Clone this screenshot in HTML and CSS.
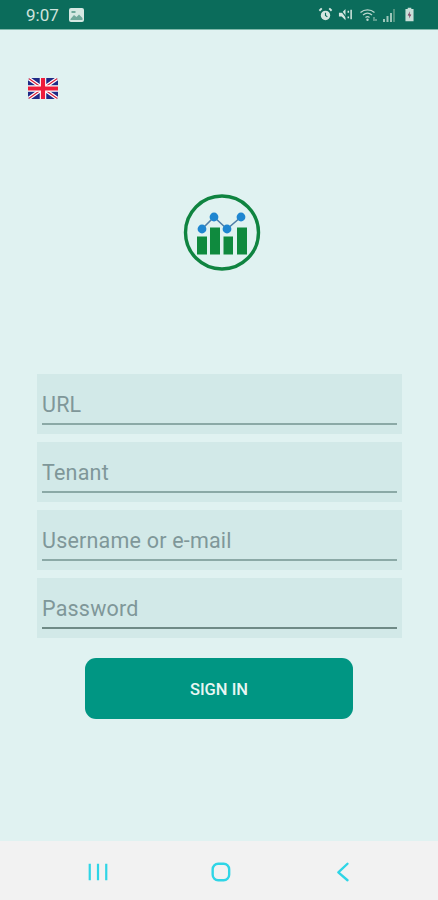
FILE: index.html
```html
<!DOCTYPE html>
<html lang="en">
<head>
<meta charset="utf-8">
<title>Sign in</title>
<link rel="stylesheet" href="styles.css">
</head>
<body>
<div class="screen">
  <header class="status">
    <div class="status-left">
      <span class="time">9:07</span>
      <svg class="ic-img" viewBox="0 0 15 14"><rect x="0" y="0" width="15" height="14" rx="2" fill="#d5e8e2"/><path d="M1.5 11 L5 7 L7.5 9 L10 6.5 L13.5 10 V12 H1.5Z" fill="#6fa99b"/><rect x="2.5" y="3" width="4" height="2" fill="#6fa99b"/></svg>
    </div>
    <div class="status-right">
      <svg class="ic-alarm" viewBox="0 0 16 16"><circle cx="8" cy="9" r="5" fill="#d3e6e0"/><path d="M1.5 4 L4 1.5 M14.5 4 L12 1.5" stroke="#d3e6e0" stroke-width="2"/><path d="M8 6 V9 L10 10.5" stroke="#0c6d5c" stroke-width="1.2" fill="none"/></svg>
      <svg class="ic-mute" viewBox="0 0 16 16"><path d="M1 6 H4 L8 2 V14 L4 10 H1Z" fill="#d3e6e0"/><path d="M2 2 L11 14" stroke="#0c6d5c" stroke-width="1.2"/><path d="M11 4 V6 M11 10 V12 M14 3 V13" stroke="#d3e6e0" stroke-width="1.6"/></svg>
      <svg class="ic-wifi" viewBox="0 0 18 14"><path d="M1 4.5 C5 1 11 1 15 4.5 M3.5 7 C6.5 4.5 9.5 4.5 12.5 7 M6 9.5 C7.5 8.3 8.5 8.3 10 9.5" stroke="#b9d6cd" stroke-width="1.3" fill="none"/><circle cx="8" cy="11.7" r="1.2" fill="#b9d6cd"/><path d="M14.5 9 V13 M16.5 11 V13" stroke="#8fbdaf" stroke-width="1.2"/></svg>
      <svg class="ic-sig" viewBox="0 0 13 14"><path d="M1 14 V11 H3 V14Z M4.5 14 V8 H6.5 V14Z M8 14 V5 H10 V14Z" fill="#9cc6b9"/><path d="M11 14 V1 H13 V14Z" fill="#4f937f"/></svg>
      <svg class="ic-bat" viewBox="0 0 10 15"><path d="M3 0 H7 V1.5 H9.5 V15 H0.5 V1.5 H3Z" fill="#c8dfd8"/><path d="M5.5 4 L3 8.5 H5 L4.5 12 L7 7.5 H5Z" fill="#7a2f55"/></svg>
    </div>
  </header>

  <main class="content">
    <svg class="flag" viewBox="0 0 30 21" role="img" aria-label="English">
      <defs><clipPath id="fc"><rect width="30" height="21" rx="2.5"/></clipPath></defs>
      <g clip-path="url(#fc)">
        <rect width="30" height="21" fill="#1f2a86"/>
        <path d="M0 0 L30 21 M30 0 L0 21" stroke="#fff" stroke-width="3.6"/>
        <path d="M0 0 L30 21 M30 0 L0 21" stroke="#d8203a" stroke-width="1.2"/>
        <path d="M15 0 V21 M0 10.5 H30" stroke="#fff" stroke-width="6.5"/>
        <path d="M15 0 V21 M0 10.5 H30" stroke="#ee1c3a" stroke-width="4.2"/>
      </g>
    </svg>

    <div class="logo-wrap">
      <svg class="logo" viewBox="0 0 78 78">
        <circle cx="39" cy="38.5" r="36.5" fill="none" stroke="#0f8440" stroke-width="3.4"/>
        <g fill="#0f8a3e">
          <rect x="14" y="42.5" width="10" height="18"/>
          <rect x="27" y="33.5" width="10" height="27"/>
          <rect x="40.5" y="42.5" width="9.5" height="18"/>
          <rect x="54" y="33.5" width="10" height="27"/>
        </g>
        <polyline points="19,35 31,23 44,35 58,23" fill="none" stroke="#4f7fa8" stroke-width="1.6"/>
        <g fill="#1f86d0">
          <circle cx="19" cy="35" r="4.4"/>
          <circle cx="31" cy="23" r="4.4"/>
          <circle cx="44" cy="35" r="4.4"/>
          <circle cx="58" cy="23" r="4.4"/>
        </g>
      </svg>
    </div>

    <form class="form">
      <div class="field"><span class="label">URL</span></div>
      <div class="field"><span class="label">Tenant</span></div>
      <div class="field"><span class="label">Username or e-mail</span></div>
      <div class="field field-active"><span class="label">Password</span></div>
      <div class="btn">SIGN IN</div>
    </form>
  </main>

  <nav class="nav">
    <svg class="nav-ic" viewBox="0 0 24 24"><path d="M3 3 V21 M12 3 V21 M21 3 V21" stroke="#2fd5e6" stroke-width="2.4" fill="none"/></svg>
    <svg class="nav-ic" viewBox="0 0 24 24"><rect x="4" y="3" width="18" height="18" rx="6" stroke="#2fd5e6" stroke-width="2.6" fill="none"/></svg>
    <svg class="nav-ic" viewBox="0 0 24 24"><path d="M18 3 L8 12.5 L18 21" stroke="#2fd5e6" stroke-width="2.6" fill="none" stroke-linecap="round" stroke-linejoin="round"/></svg>
  </nav>
</div>
</body>
</html>
```
FILE: styles.css
```css
* { box-sizing: border-box; }
html, body { margin: 0; padding: 0; }
body { font-family: Roboto, "Liberation Sans", sans-serif; background: #e0f2f1; }

.screen { width: 438px; height: 900px; display: flex; flex-direction: column; overflow: hidden; background: #e0f2f1; }

.status { height: 30px; flex: none; background: #0b6c5b; border-bottom: 1px solid #7fb8aa; display: flex; justify-content: space-between; align-items: center; padding: 0 24px 0 26px; }
.status svg { filter: blur(0.4px); }
.status-left { display: flex; align-items: center; gap: 10px; }
.time { font-size: 17px; color: #cfe3dd; }
.ic-img { width: 15px; height: 14px; }
.status-right { display: flex; align-items: center; }
.ic-alarm { width: 15px; height: 15px; }
.ic-mute { width: 15px; height: 15px; margin-left: 5px; }
.ic-wifi { width: 19px; height: 14px; margin-left: 6px; }
.ic-sig { width: 13px; height: 14px; margin-left: 4px; }
.ic-bat { width: 9px; height: 15px; margin-left: 10px; }

.content { flex: 1; display: flex; flex-direction: column; padding: 48px 36px 0 37px; }
.flag { width: 30px; height: 21px; margin-left: -9px; display: block; }
.logo-wrap { display: flex; justify-content: center; margin-top: 95px; padding-left: 5px; height: 180px; }
.logo { width: 78px; height: 78px; margin-left: -1px; }

.form { display: flex; flex-direction: column; gap: 8px; }
.field { height: 60px; background: #d2e9e8; padding: 0 5px 9px; display: flex; align-items: flex-end; }
.label { flex: 1; font-size: 21.5px; line-height: 30px; color: #7f9799; border-bottom: 2px solid #8ba9a6; padding: 7px 0 3px; height: 42px; letter-spacing: 0.2px; }
.field-active .label { border-bottom-color: #6f8a86; }

.btn { width: 268px; height: 61px; margin: 12px 0 0 48px; padding-top: 2px; background: #009683; border-radius: 11px; color: #e8f6f3; font-size: 16.5px; font-weight: 500; display: flex; align-items: center; justify-content: center; }

.nav { height: 59px; flex: none; background: #f2f2f2; display: flex; justify-content: space-between; align-items: center; padding: 3px 85px 0 87px; }
.nav-ic { width: 22px; height: 22px; }
```
